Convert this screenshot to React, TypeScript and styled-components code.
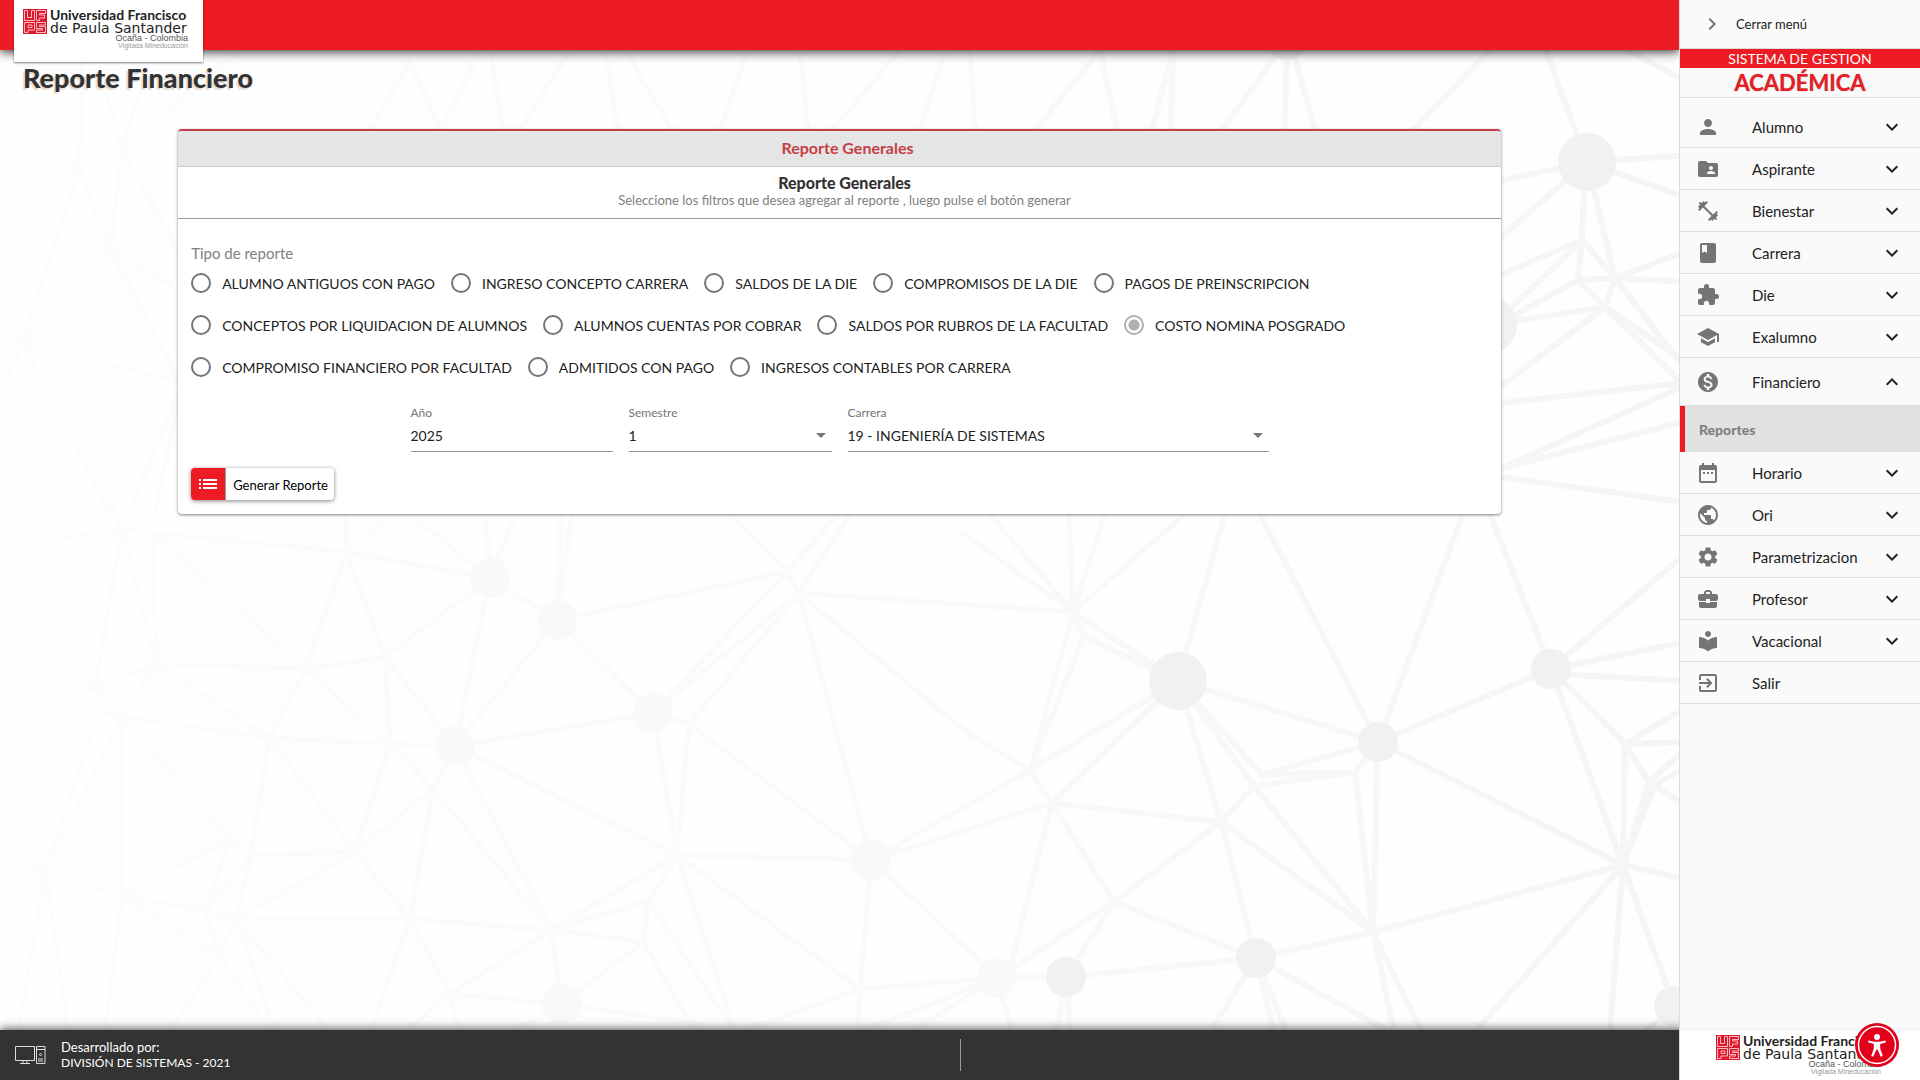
import React, { useState } from "react";
import styled, { createGlobalStyle } from "styled-components";
import type { IconType } from "react-icons";
import {
  MdBook,
  MdBusinessCenter,
  MdChevronRight,
  MdDateRange,
  MdExitToApp,
  MdExpandLess,
  MdExpandMore,
  MdExtension,
  MdFitnessCenter,
  MdFolderShared,
  MdList,
  MdLocalLibrary,
  MdMonetizationOn,
  MdPerson,
  MdPublic,
  MdSchool,
  MdSettings,
} from "react-icons/md";

const RED = "#ed1c24";
const FONT = '"Lato", "Open Sans", sans-serif';

const GlobalStyle = createGlobalStyle`
  *, *::before, *::after { box-sizing: border-box; }
  body { margin: 0; background: #fff; color: #212121; font-family: ${FONT}; font-size: 14px; }
  h1, h2, h3, p, ul, fieldset { margin: 0; padding: 0; }
  fieldset { border: 0; min-width: 0; }
  ul { list-style: none; }
  button, input, select { font: inherit; color: inherit; }
  button { cursor: pointer; }
`;

const Page = styled.div`
  display: grid;
  grid-template-columns: minmax(0, 1fr) 241px;
  min-height: 100vh;
`;

const Main = styled.div`
  position: relative;
  display: flex;
  flex-direction: column;
  overflow: hidden;
  isolation: isolate;
`;

const Backdrop = styled.svg`
  position: absolute;
  inset: 0;
  width: 100%;
  height: 100%;
  z-index: -1;
`;

const TopBar = styled.header`
  display: flex;
  align-items: flex-start;
  height: 50px;
  padding-left: 14px;
  background: ${RED};
  box-shadow: 0 2px 10px rgba(0, 0, 0, 0.8);
`;

const LogoCard = styled.a`
  display: block;
  height: 62px;
  padding: 9px 12px 0 9px;
  background: #fff;
  box-shadow: 0 1px 2px rgba(0, 0, 0, 0.5);
  text-decoration: none;
`;

const LogoRow = styled.span`
  display: flex;
  gap: 3px;
`;

const LogoMark = styled.svg`
  flex: none;
  width: 24px;
  height: 25px;
`;

const LogoText = styled.span`
  display: flex;
  flex-direction: column;
  width: 141px;
  color: #222;
  white-space: nowrap;
`;

const LogoName = styled.span`
  font: 700 14px/12px "Lato", sans-serif;
`;

const LogoNameWide = styled.span`
  font: 500 14px/14px "DejaVu Sans", sans-serif;
`;

const LogoPlace = styled.span<{ $faint?: boolean }>`
  align-self: flex-end;
  margin-right: 3px;
  font-family: ${(p) => (p.$faint ? "" : '"Liberation Sans Narrow",')} "Liberation Sans", sans-serif;
  font-size: ${(p) => (p.$faint ? "7px" : "9px")};
  line-height: ${(p) => (p.$faint ? "8px" : "7px")};
  color: ${(p) => (p.$faint ? "#999" : "#555")};
`;

const Content = styled.main`
  flex: 1;
  padding: 11px 23px 24px;
`;

const PageTitle = styled.h1`
  font-size: 27px;
  line-height: 34px;
  font-weight: 900;
  color: #333;
  text-shadow: -2px 2px 0 #ebdfd4;
`;

const Card = styled.section`
  width: 81%;
  margin: 34px auto 0;
  overflow: hidden;
  border-top: 2px solid #c73e46;
  border-radius: 4px;
  background: #fff;
  box-shadow: 0 1px 3px rgba(0, 0, 0, 0.5);
`;

const CardHeader = styled.h2`
  height: 36px;
  padding-left: 16px;
  background: #e5e5e5;
  border-bottom: 1px solid #ccc;
  color: #c73e46;
  font-size: 16px;
  line-height: 34px;
  font-weight: 700;
  text-align: center;
`;

const CardIntro = styled.div`
  height: 52px;
  padding: 7px 0 0 10px;
  border-bottom: 1px solid #999;
  text-align: center;
`;

const IntroTitle = styled.h3`
  font-size: 16px;
  line-height: 18px;
  font-weight: 900;
  color: #333;
`;

const IntroText = styled.p`
  font-size: 13px;
  line-height: 16px;
  color: #808080;
`;

const Form = styled.form`
  padding: 26px 13px 14px;
`;

const GroupLabel = styled.legend`
  padding: 0;
  font-size: 15px;
  line-height: 17px;
  color: #808080;
`;

const RadioRow = styled.div`
  display: flex;
  flex-wrap: wrap;
  column-gap: 16px;
`;

const RadioLabel = styled.label`
  display: flex;
  align-items: center;
  gap: 11px;
  height: 42px;
  white-space: nowrap;
`;

const RadioInput = styled.input`
  appearance: none;
  width: 20px;
  height: 20px;
  margin: 0;
  border: 2px solid #757575;
  border-radius: 50%;
  background: #fff;
  &:checked {
    border-color: #b0b0b0;
    background: radial-gradient(circle, #b0b0b0 5px, #fff 6px);
  }
`;

const Fields = styled.div`
  display: grid;
  grid-template-columns: 202px 203px 421px;
  justify-content: center;
  gap: 16px;
  padding-top: 17px;
`;

const Field = styled.div`
  position: relative;
  display: flex;
  flex-direction: column;
  border-bottom: 1px solid #949494;
`;

const FieldLabel = styled.label`
  font-size: 12px;
  line-height: 16px;
  color: #757575;
`;

const fieldControl = `
  appearance: none;
  width: 100%;
  height: 30px;
  padding: 0 0 2px;
  border: 0;
  outline: 0;
  background: transparent;
  color: #212121;
`;

const TextInput = styled.input`
  ${fieldControl}
`;

const SelectInput = styled.select`
  ${fieldControl}
`;

const Caret = styled.svg`
  position: absolute;
  right: 6px;
  bottom: 13px;
  width: 10px;
  height: 5px;
  fill: #757575;
  pointer-events: none;
`;

const ActionButton = styled.button`
  display: flex;
  align-items: center;
  height: 32px;
  margin-top: 16px;
  padding: 0;
  overflow: hidden;
  border: 0;
  border-radius: 4px;
  background: #fff;
  color: #000;
  font-size: 13px;
  box-shadow: 0 1px 4px rgba(0, 0, 0, 0.5);
`;

const ActionIcon = styled.span`
  display: flex;
  align-items: center;
  justify-content: center;
  width: 35px;
  height: 32px;
  background: ${RED};
  border-right: 1px solid #999;
  color: #fff;
  font-size: 24px;
`;

const ActionText = styled.span`
  padding: 2px 6px 0 7px;
`;

const Footer = styled.footer`
  display: grid;
  grid-template-columns: 1fr 1px 1fr;
  align-items: center;
  height: 50px;
  margin-right: -241px;
  padding: 0 15px;
  background: #333;
  color: #fff;
  box-shadow: 0 -2px 8px rgba(0, 0, 0, 0.6);
`;

const Credits = styled.div`
  display: flex;
  align-items: center;
  gap: 15px;
  font-size: 13px;
  line-height: 16px;
`;

const Division = styled.p`
  font-size: 12px;
`;

const ComputerIcon = styled.svg`
  width: 31px;
  height: 20px;
  fill: none;
  stroke: #ddd;
`;

const Divider = styled.span`
  height: 32px;
  background: #999;
`;

const Sidebar = styled.aside`
  position: relative;
  z-index: 1;
  display: flex;
  flex-direction: column;
  border-left: 1px solid #dcdcdc;
  background: #fafafa;
`;

const CloseButton = styled.button`
  display: flex;
  align-items: center;
  gap: 12px;
  height: 49px;
  padding: 0 20px;
  border: 0;
  border-bottom: 1px solid #dcdcdc;
  background: transparent;
  font-size: 13px;
  svg {
    font-size: 24px;
    color: #757575;
  }
`;

const SystemBand = styled.div`
  height: 19px;
  background: ${RED};
  color: #fff;
  font-size: 14px;
  line-height: 19px;
  text-align: center;
`;

const SystemName = styled.div`
  height: 30px;
  border-bottom: 1px solid #dcdcdc;
  color: ${RED};
  font-size: 22px;
  line-height: 30px;
  font-weight: 700;
  text-align: center;
  text-shadow: 0 0 1px rgba(0, 0, 0, 0.5);
`;

const Menu = styled.nav`
  flex: 1;
  padding-top: 8px;
`;

const MenuButton = styled.button<{ $open?: boolean }>`
  display: grid;
  grid-template-columns: 56px 1fr 24px;
  align-items: center;
  width: 100%;
  height: ${(p) => (p.$open ? "48px" : "42px")};
  padding: 0 16px;
  border: 0;
  border-bottom: 1px solid #dcdcdc;
  background: transparent;
  font-size: 15px;
  text-align: left;
  white-space: nowrap;
  svg {
    font-size: 24px;
    color: #757575;
  }
  svg:last-child:not(:first-child) {
    color: #212121;
  }
`;

const SubLink = styled.a`
  display: flex;
  align-items: center;
  height: 46px;
  padding-left: 14px;
  border-left: 5px solid ${RED};
  background: #e1e1e1;
  color: #808080;
  font-size: 14px;
  font-weight: 900;
  text-decoration: none;
`;

const SideFooter = styled.div`
  display: flex;
  justify-content: center;
  height: 50px;
  padding-top: 5px;
  background: #fff;
  box-shadow: 0 -1px 2px rgba(0, 0, 0, 0.06);
`;

const AccessButton = styled.button`
  position: fixed;
  right: 21px;
  bottom: 13px;
  z-index: 2;
  width: 44px;
  height: 44px;
  padding: 0;
  border: 0;
  border-radius: 50%;
  background: #e2001a;
  svg {
    display: block;
  }
`;

type Point = [number, number];

/* Vertices of the decorative network, joined by the segments below. */
const lightPaths: Point[][] = [
  [[0, 547], [122, 529], [153, 533], [346, 552], [490, 578], [557, 620], [787, 572], [799, 593], [1073, 612]],
  [[110, 500], [122, 529], [156, 664], [306, 669], [385, 657], [490, 578], [410, 514]],
  [[153, 533], [156, 664], [95, 688], [0, 728]],
  [[0, 622], [95, 688], [122, 717], [269, 738], [390, 744], [455, 746], [653, 713], [689, 724], [871, 860]],
  [[0, 741], [95, 710], [122, 717], [156, 664], [269, 738], [306, 669], [346, 552], [385, 657], [390, 744], [355, 852], [269, 738], [251, 855], [236, 919]],
  [[153, 533], [306, 669], [390, 744], [433, 789], [551, 930]],
  [[122, 529], [95, 688]],
  [[346, 514], [346, 552], [390, 514]],
  [[385, 657], [455, 746], [551, 930]],
  [[490, 578], [455, 746], [557, 620], [653, 713], [787, 572], [715, 500]],
  [[485, 514], [490, 578], [516, 514]],
  [[561, 514], [557, 620], [572, 514]],
  [[787, 572], [850, 500]],
  [[799, 593], [859, 500]],
  [[799, 593], [653, 713], [677, 855], [689, 724], [799, 593], [871, 860]],
  [[799, 593], [970, 735], [1030, 770], [1052, 803], [871, 860]],
  [[455, 746], [433, 789], [355, 852], [251, 855], [205, 911], [219, 956], [170, 1032]],
  [[455, 746], [677, 855], [871, 860]],
  [[677, 855], [551, 930]],
  [[433, 789], [410, 919], [370, 1032]],
  [[122, 717], [122, 896], [105, 1032]],
  [[122, 717], [230, 839], [251, 855]],
  [[122, 717], [46, 870], [98, 710]],
  [[0, 850], [46, 870], [122, 896], [205, 911], [236, 919], [410, 919], [551, 930], [643, 942], [562, 1004]],
  [[0, 877], [46, 870], [18, 1032]],
  [[46, 870], [68, 1032]],
  [[122, 896], [230, 839], [205, 911]],
  [[122, 896], [219, 956], [236, 919], [355, 852], [410, 919], [450, 994], [460, 1032]],
  [[270, 1032], [219, 956]],
  [[236, 919], [275, 1032]],
  [[236, 919], [330, 1032]],
  [[405, 1032], [450, 994], [551, 930], [562, 1004], [450, 994]],
  [[562, 1004], [700, 1024]],
  [[562, 1004], [515, 1032]],
  [[677, 855], [649, 901], [551, 930]],
  [[649, 901], [643, 942], [695, 1032]],
  [[649, 901], [735, 1032]],
  [[677, 855], [735, 1032]],
  [[677, 855], [860, 989], [871, 860], [960, 942], [997, 978]],
  [[740, 1032], [860, 989], [997, 978]],
  [[858, 1032], [860, 989]],
  [[860, 1032], [997, 978], [910, 1032]],
  [[871, 860], [1030, 770], [1073, 612], [960, 531]],
  [[990, 514], [1073, 612], [1069, 514]],
  [[1105, 514], [1073, 612], [1185, 514]],
  [[0, 113], [79, 170], [122, 150], [240, 50]],
  [[0, 195], [79, 170], [83, 60]],
  [[105, 90], [122, 150], [140, 90]],
  [[79, 170], [110, 250], [122, 150], [180, 255]],
  [[79, 170], [23, 343], [110, 250], [180, 290]],
  [[0, 325], [23, 343], [180, 382], [110, 250]],
  [[0, 390], [23, 343], [110, 514]],
  [[128, 514], [180, 390], [155, 514]],
  [[370, 130], [410, 62], [440, 130], [480, 50]],
  [[490, 50], [503, 130]],
  [[520, 130], [570, 50]],
  [[605, 50], [618, 130]],
  [[625, 50], [672, 130]],
  [[720, 130], [748, 50]],
  [[800, 50], [808, 130]],
  [[832, 130], [900, 50]],
  [[920, 130], [945, 50]],
  [[970, 50], [975, 130]],
];

const strongPaths: Point[][] = [
  [[1035, 130], [1100, 50], [1117, 130]],
  [[1152, 130], [1173, 50], [1171, 130]],
  [[1222, 130], [1287, 40], [1285, 130]],
  [[1290, 40], [1315, 130]],
  [[1413, 130], [1490, 50]],
  [[1542, 40], [1587, 162], [1690, 155]],
  [[1610, 40], [1690, 84]],
  [[1500, 181], [1587, 162], [1690, 199]],
  [[1587, 162], [1500, 238]],
  [[1585, 162], [1582, 240], [1578, 280], [1615, 278], [1690, 282]],
  [[1587, 162], [1615, 278], [1582, 240], [1500, 275]],
  [[1582, 240], [1488, 330], [1578, 280], [1605, 307], [1615, 278], [1690, 250]],
  [[1488, 325], [1605, 307], [1682, 383], [1502, 403]],
  [[1605, 307], [1500, 387]],
  [[1615, 278], [1690, 375]],
  [[1605, 307], [1690, 365]],
  [[1690, 383], [1502, 468], [1690, 420]],
  [[1500, 477], [1690, 503]],
  [[1225, 514], [1178, 681], [1378, 742], [1260, 514]],
  [[1463, 514], [1378, 742], [1551, 669], [1490, 514]],
  [[1551, 669], [1690, 550]],
  [[1551, 669], [1690, 641]],
  [[1551, 674], [1690, 681]],
  [[1073, 612], [1084, 636], [1178, 681], [1030, 770]],
  [[1073, 612], [1178, 681], [1052, 803], [1221, 822], [1178, 681], [1254, 786], [1373, 932]],
  [[1084, 636], [1030, 770], [1052, 803], [1008, 978]],
  [[1178, 681], [1262, 775], [1378, 742], [1355, 772], [1373, 932]],
  [[1254, 786], [1355, 772], [1262, 775]],
  [[1254, 786], [1221, 822], [1114, 902], [1066, 977]],
  [[1221, 822], [1373, 932], [1378, 742], [1623, 865], [1551, 669], [1625, 744], [1623, 865], [1649, 782]],
  [[1625, 744], [1690, 705]],
  [[1625, 744], [1690, 742]],
  [[1625, 744], [1649, 782], [1690, 745]],
  [[1655, 785], [1690, 765]],
  [[1649, 782], [1690, 808]],
  [[1655, 785], [1623, 865], [1690, 880]],
  [[1052, 803], [1114, 902], [1256, 958], [1373, 932], [1623, 865], [1475, 1032]],
  [[1221, 822], [1256, 958]],
  [[997, 978], [1114, 902]],
  [[997, 978], [1066, 977], [1256, 958], [1210, 1032]],
  [[997, 978], [1012, 1032]],
  [[1066, 977], [1056, 1032]],
  [[1066, 977], [1070, 1032]],
  [[1256, 958], [1274, 1032]],
  [[1256, 958], [1287, 1032]],
  [[1256, 958], [1390, 1032]],
  [[1373, 932], [1394, 1032]],
  [[1373, 932], [1422, 1032]],
  [[1623, 865], [1610, 1032]],
  [[1623, 865], [1674, 1006], [1645, 1032]],
];

const lightNodes = [[490, 578, 20], [557, 620, 20], [653, 713, 20], [455, 746, 20], [871, 860, 20], [562, 1004, 20], [997, 978, 20]];
const strongNodes = [[1178, 681, 29], [1378, 742, 20], [1551, 669, 20], [1066, 977, 20], [1256, 958, 20], [1674, 1006, 20], [1587, 162, 29], [1488, 325, 29], [1287, 40, 20]];

const toPath = (points: Point[]) => "M" + points.map((p) => p.join(" ")).join("L");

function Network() {
  return (
    <Backdrop viewBox="0 0 1679 1080" preserveAspectRatio="xMinYMin slice" aria-hidden="true">
      <defs>
        <linearGradient id="fade" gradientUnits="userSpaceOnUse" x1="0" y1="0" x2="1679" y2="0">
          <stop offset="0" stopColor="#fcfcfc" />
          <stop offset="0.5" stopColor="#fafafa" />
          <stop offset="1" stopColor="#f5f5f5" />
        </linearGradient>
      </defs>
      <rect width="1679" height="1080" fill="#fefefe" />
      <g fill="none" stroke="url(#fade)">
        <path strokeWidth="5" d={lightPaths.map(toPath).join("")} />
        <path strokeWidth="6" d={strongPaths.map(toPath).join("")} />
      </g>
      {lightNodes.map(([cx, cy, r]) => (
        <circle key={cx} cx={cx} cy={cy} r={r} fill="#f9f9f9" />
      ))}
      {strongNodes.map(([cx, cy, r]) => (
        <circle key={cx} cx={cx} cy={cy} r={r} fill="#f1f1f1" />
      ))}
    </Backdrop>
  );
}

function Logo() {
  return (
    <LogoRow>
      <LogoMark viewBox="0 0 24 25" aria-hidden="true">
        <rect width="24" height="25" fill="#e0182d" />
        <g fill="none" stroke="#f6bcc1" strokeWidth="1">
          <path d="M1.500 1.500h3v7h4v-7h3v10h-10z" />
          <path d="M13.500 1.500h9v3h-6v1.500h5v3h-5v2.500h-3z" />
          <path d="M1.500 13.500h10v7.500h-6.500v2.500h-3.500zM5 16h4v2.500h-4z" />
          <path d="M13.500 13.500h9v2.500h-6v1.500h6v6h-9v-2.500h6v-1.500h-6z" />
        </g>
      </LogoMark>
      <LogoText>
        <LogoName>Universidad Francisco</LogoName>
        <LogoNameWide>de Paula Santander</LogoNameWide>
        <LogoPlace>Ocaña - Colombia</LogoPlace>
        <LogoPlace $faint>Vigilada Mineducación</LogoPlace>
      </LogoText>
    </LogoRow>
  );
}

const reportRows = [
  ["ALUMNO ANTIGUOS CON PAGO", "INGRESO CONCEPTO CARRERA", "SALDOS DE LA DIE", "COMPROMISOS DE LA DIE", "PAGOS DE PREINSCRIPCION"],
  ["CONCEPTOS POR LIQUIDACION DE ALUMNOS", "ALUMNOS CUENTAS POR COBRAR", "SALDOS POR RUBROS DE LA FACULTAD", "COSTO NOMINA POSGRADO"],
  ["COMPROMISO FINANCIERO POR FACULTAD", "ADMITIDOS CON PAGO", "INGRESOS CONTABLES POR CARRERA"],
];

const menuItems: { label: string; icon: IconType; leaf?: boolean; children?: string[] }[] = [
  { label: "Alumno", icon: MdPerson },
  { label: "Aspirante", icon: MdFolderShared },
  { label: "Bienestar", icon: MdFitnessCenter },
  { label: "Carrera", icon: MdBook },
  { label: "Die", icon: MdExtension },
  { label: "Exalumno", icon: MdSchool },
  { label: "Financiero", icon: MdMonetizationOn, children: ["Reportes"] },
  { label: "Horario", icon: MdDateRange },
  { label: "Ori", icon: MdPublic },
  { label: "Parametrizacion", icon: MdSettings },
  { label: "Profesor", icon: MdBusinessCenter },
  { label: "Vacacional", icon: MdLocalLibrary },
  { label: "Salir", icon: MdExitToApp, leaf: true },
];

function SelectField({ id, label, value }: { id: string; label: string; value: string }) {
  return (
    <Field>
      <FieldLabel htmlFor={id}>{label}</FieldLabel>
      <SelectInput id={id} defaultValue={value}>
        <option>{value}</option>
      </SelectInput>
      <Caret viewBox="0 0 10 5" aria-hidden="true">
        <path d="M0 0h10L5 5z" />
      </Caret>
    </Field>
  );
}

export default function App() {
  const [report, setReport] = useState("COSTO NOMINA POSGRADO");

  return (
    <Page>
      <GlobalStyle />
      <Main>
        <Network />
        <TopBar>
          <LogoCard href="#inicio">
            <Logo />
          </LogoCard>
        </TopBar>
        <Content>
          <PageTitle>Reporte Financiero</PageTitle>
          <Card>
            <CardHeader>Reporte Generales</CardHeader>
            <CardIntro>
              <IntroTitle>Reporte Generales</IntroTitle>
              <IntroText>Seleccione los filtros que desea agregar al reporte , luego pulse el botón generar</IntroText>
            </CardIntro>
            <Form onSubmit={(e) => e.preventDefault()}>
              <fieldset>
                <GroupLabel>Tipo de reporte</GroupLabel>
                {reportRows.map((row) => (
                  <RadioRow key={row[0]}>
                    {row.map((name) => (
                      <RadioLabel key={name}>
                        <RadioInput type="radio" name="reporte" checked={report === name} onChange={() => setReport(name)} />
                        {name}
                      </RadioLabel>
                    ))}
                  </RadioRow>
                ))}
              </fieldset>
              <Fields>
                <Field>
                  <FieldLabel htmlFor="anio">Año</FieldLabel>
                  <TextInput id="anio" type="text" defaultValue="2025" />
                </Field>
                <SelectField id="semestre" label="Semestre" value="1" />
                <SelectField id="carrera" label="Carrera" value="19 - INGENIERÍA DE SISTEMAS" />
              </Fields>
              <ActionButton type="submit">
                <ActionIcon>
                  <MdList />
                </ActionIcon>
                <ActionText>Generar Reporte</ActionText>
              </ActionButton>
            </Form>
          </Card>
        </Content>
        <Footer>
          <Credits>
            <ComputerIcon viewBox="0 0 31 20" aria-hidden="true">
              <path d="M.5 1.500h19v14h-19zM8 15.500v2.500M12 15.500v2.500M5 18.500h10M21.500 1.500h8.500v17h-8.500zM21.500 4.500h8.500M23 14h5M23 16h5" />
              <circle cx="25.500" cy="9.500" r="1" />
            </ComputerIcon>
            <div>
              <p>Desarrollado por:</p>
              <Division>DIVISIÓN DE SISTEMAS - 2021</Division>
            </div>
          </Credits>
          <Divider />
        </Footer>
      </Main>
      <Sidebar>
        <CloseButton type="button">
          <MdChevronRight />
          Cerrar menú
        </CloseButton>
        <SystemBand>SISTEMA DE GESTION</SystemBand>
        <SystemName>ACADÉMICA</SystemName>
        <Menu>
          <ul>
            {menuItems.map(({ label, icon: Icon, leaf, children }) => (
              <li key={label}>
                <MenuButton type="button" $open={!!children}>
                  <Icon />
                  <span>{label}</span>
                  {!leaf && (children ? <MdExpandLess /> : <MdExpandMore />)}
                </MenuButton>
                {children?.map((child) => (
                  <SubLink key={child} href="#reportes">
                    {child}
                  </SubLink>
                ))}
              </li>
            ))}
          </ul>
        </Menu>
        <SideFooter>
          <Logo />
        </SideFooter>
      </Sidebar>
      <AccessButton type="button" aria-label="Accesibilidad">
        <svg width="44" height="44" viewBox="0 0 44 44">
          <circle cx="22" cy="22" r="18.500" fill="none" stroke="#fff" strokeWidth="1.500" />
          <g fill="#fff">
            <circle cx="22" cy="14" r="3" />
            <path d="M13.500 17.500l5.500 1.200h6l5.500-1.200.5 1.800-5.800 1.800v4.400l2.600 7.500-2 .7-3.300-7.200h-1l-3.300 7.200-2-.7 2.600-7.500v-4.400l-5.800-1.800z" />
          </g>
        </svg>
      </AccessButton>
    </Page>
  );
}
